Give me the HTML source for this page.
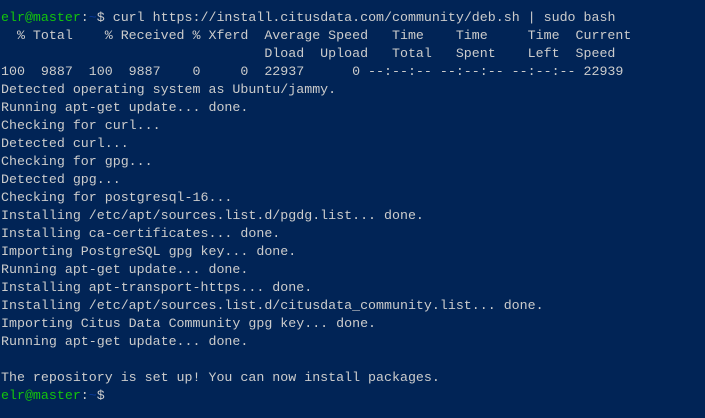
<!DOCTYPE html><html><head><style>
html,body{margin:0;width:705px;height:418px;background:#012456;overflow:hidden}
pre{margin:0;padding:9px 0 0 1px;font-family:"Liberation Mono",monospace;font-size:13.3px;line-height:18px;color:#cccccc;white-space:pre}
.g{color:#13c40c}.b{color:#0a3a9a}
</style></head><body><pre><span class="g">elr@master</span>:<span class="b">~</span>$ curl https://install.citusdata.com/community/deb.sh | sudo bash
  % Total    % Received % Xferd  Average Speed   Time    Time     Time  Current
                                 Dload  Upload   Total   Spent    Left  Speed
100  9887  100  9887    0     0  22937      0 --:--:-- --:--:-- --:--:-- 22939
Detected operating system as Ubuntu/jammy.
Running apt-get update... done.
Checking for curl...
Detected curl...
Checking for gpg...
Detected gpg...
Checking for postgresql-16...
Installing /etc/apt/sources.list.d/pgdg.list... done.
Installing ca-certificates... done.
Importing PostgreSQL gpg key... done.
Running apt-get update... done.
Installing apt-transport-https... done.
Installing /etc/apt/sources.list.d/citusdata_community.list... done.
Importing Citus Data Community gpg key... done.
Running apt-get update... done.

The repository is set up! You can now install packages.
<span class="g">elr@master</span>:<span class="b">~</span>$
</pre></body></html>
